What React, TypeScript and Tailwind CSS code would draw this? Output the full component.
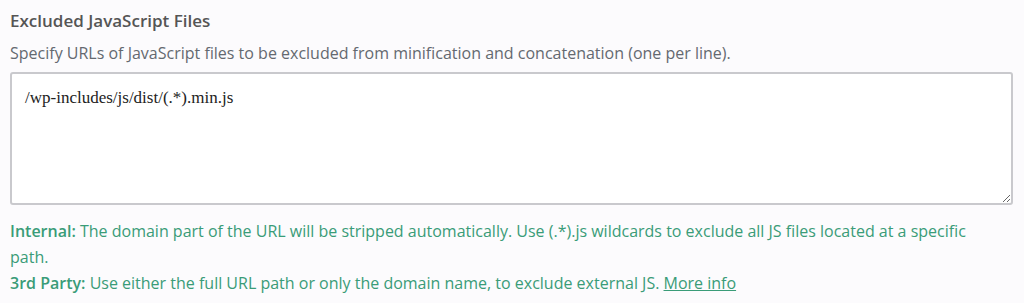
export default function App() {
  return (
    <div
      className="min-h-[303px] w-full bg-[#fcfbfd] px-[10px] pt-[9px]"
      style={{ fontFamily: '"Open Sans", "Noto Sans", sans-serif' }}
    >
      <h3 className="text-[17px] font-semibold leading-[24px] text-[#555]">
        Excluded JavaScript Files
      </h3>
      <p className="mt-[9px] text-[16px] leading-[22px] text-[#646970]">
        Specify URLs of JavaScript files to be excluded from minification and concatenation (one per line).
      </p>
      <textarea
        className="mt-[8px] block h-[133px] w-[1003px] resize-y rounded-[3px] border-2 border-[#c9c9cd] bg-white px-[13px] pt-[14px] text-[17px] leading-[20px] text-[#222] outline-none"
        style={{ fontFamily: '"Liberation Serif", serif' }}
        defaultValue="/wp-includes/js/dist/(.*).min.js"
      />
      <div className="mt-[13px] w-[990px] text-[16px] leading-[26px] text-[#3a9c78]">
        <p>
          <span className="font-semibold">Internal:</span> The domain part of the URL will be stripped automatically.
          Use (.*).js wildcards to exclude all JS files located at a specific path.
        </p>
        <p>
          <span className="font-semibold">3rd Party:</span> Use either the full URL path or only the domain name, to
          exclude external JS.{" "}
          <a href="#" className="underline">
            More info
          </a>
        </p>
      </div>
    </div>
  );
}
